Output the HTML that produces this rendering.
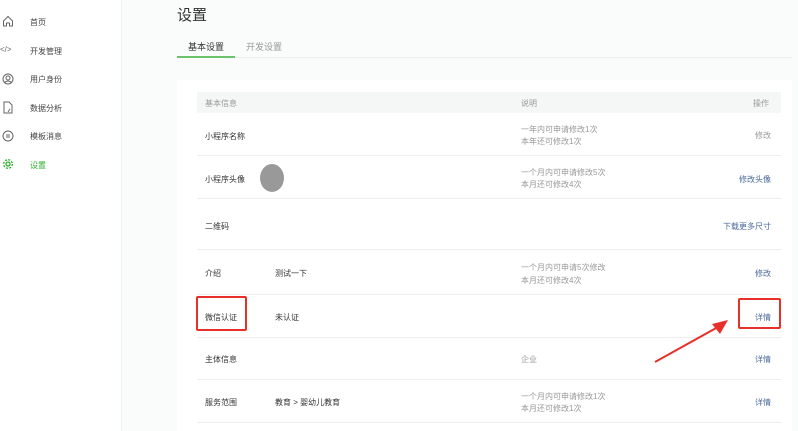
<!DOCTYPE html>
<html><head><meta charset="utf-8"><style>
*{margin:0;padding:0;box-sizing:border-box}
body{width:798px;height:431px;overflow:hidden;background:#fafbfb;font-family:"Liberation Sans","Noto Sans CJK SC",sans-serif;position:relative;color:#333}
.side{position:absolute;left:0;top:0;width:122px;height:431px;background:#fff;border-right:1px solid #eee}
.nav{position:absolute;left:30px;font-size:8px;color:#444}
.ic{position:absolute;left:2px}
.abs{position:absolute}
.t{position:absolute;font-size:8px;white-space:nowrap}
.card{position:absolute;left:177px;top:80px;width:615px;height:351px;background:#fff}
.row{position:absolute;left:197px;width:584px;border-bottom:1px solid #eee}
.g{color:#999}.b{color:#4a6a9a}
</style></head><body>
<div class="side">
<svg class="ic" style="top:15px" width="12" height="12" viewBox="0 0 12 12" fill="none" stroke="#666" stroke-width="1"><path d="M1.5 6L6 1.5 10.5 6V11H7.5V8H4.5V11H1.5Z"/></svg>
<div class="nav" style="top:17px">首页</div>
<div class="t" style="left:0;top:45px;font-size:8px;color:#666">&lt;/&gt;</div>
<div class="nav" style="top:46px">开发管理</div>
<svg class="ic" style="top:73px" width="12" height="12" viewBox="0 0 12 12" fill="none" stroke="#666"><circle cx="6" cy="6" r="5"/><circle cx="6" cy="5" r="2"/><path d="M2.5 9.5Q6 6.5 9.5 9.5"/></svg>
<div class="nav" style="top:74px">用户身份</div>
<svg class="ic" style="top:101px" width="12" height="13" viewBox="0 0 12 13" fill="none" stroke="#666"><path d="M2 1H7L10 4V12H2Z M8 8L6 11"/></svg>
<div class="nav" style="top:103px">数据分析</div>
<svg class="ic" style="top:130px" width="12" height="12" viewBox="0 0 12 12" fill="none" stroke="#666"><circle cx="6" cy="6" r="5"/><path d="M4 5H8M4 7H8"/></svg>
<div class="nav" style="top:131px">模板消息</div>
<svg class="ic" style="top:158px" width="12" height="12" viewBox="0 0 12 12" fill="none" stroke="#2aae2a" stroke-width="1.3"><circle cx="6" cy="6" r="2"/><circle cx="6" cy="6" r="4.3" stroke-dasharray="2 1.4"/></svg>
<div class="nav" style="top:160px;color:#2aae2a">设置</div>
</div>
<div class="t" style="left:177px;top:4px;font-size:15px;color:#333">设置</div>
<div class="t" style="left:188px;top:40px;font-size:9px;color:#333">基本设置</div>
<div class="t" style="left:246px;top:40px;font-size:9px;color:#999">开发设置</div>
<div class="abs" style="left:177px;top:56px;width:58px;height:2px;background:#6cc36c"></div>
<div class="abs" style="left:235px;top:57px;width:557px;height:1px;background:#eee"></div>
<div class="card"></div>
<div class="abs" style="left:197px;top:92px;width:584px;height:21px;background:#f5f6f6"></div>
<div class="t g" style="left:205px;top:98px">基本信息</div>
<div class="t g" style="left:521px;top:98px">说明</div>
<div class="t g" style="left:753px;top:98px">操作</div>
<div class="row" style="top:113px;height:43px"></div>
<div class="row" style="top:156px;height:43px"></div>
<div class="row" style="top:199px;height:51px"></div>
<div class="row" style="top:250px;height:45px"></div>
<div class="row" style="top:295px;height:43px"></div>
<div class="row" style="top:338px;height:42px"></div>
<div class="row" style="top:380px;height:43px"></div>
<div class="t" style="left:205px;top:131px">小程序名称</div>
<div class="t g" style="left:521px;top:124px">一年内可申请修改1次</div>
<div class="t g" style="left:521px;top:136px">本年还可修改1次</div>
<div class="t g" style="left:755px;top:130px">修改</div>
<div class="t" style="left:205px;top:174px">小程序头像</div>
<div class="abs" style="left:260px;top:164px;width:24px;height:28px;border-radius:50%;background:#999"></div>
<div class="t g" style="left:521px;top:167px">一个月内可申请修改5次</div>
<div class="t g" style="left:521px;top:179px">本月还可修改4次</div>
<div class="t b" style="left:739px;top:174px">修改头像</div>
<div class="t" style="left:205px;top:221px">二维码</div>
<div class="t b" style="left:723px;top:221px">下载更多尺寸</div>
<div class="t" style="left:205px;top:268px">介绍</div>
<div class="t" style="left:275px;top:268px">测试一下</div>
<div class="t g" style="left:521px;top:262px">一个月内可申请5次修改</div>
<div class="t g" style="left:521px;top:275px">本月还可修改4次</div>
<div class="t b" style="left:755px;top:268px">修改</div>
<div class="t" style="left:205px;top:312px">微信认证</div>
<div class="t" style="left:275px;top:312px">未认证</div>
<div class="t b" style="left:755px;top:312px">详情</div>
<div class="t" style="left:205px;top:354px">主体信息</div>
<div class="t g" style="left:521px;top:354px">企业</div>
<div class="t b" style="left:755px;top:354px">详情</div>
<div class="t" style="left:205px;top:397px">服务范围</div>
<div class="t" style="left:275px;top:397px">教育 &gt; 婴幼儿教育</div>
<div class="t g" style="left:521px;top:391px">一个月内可申请修改1次</div>
<div class="t g" style="left:521px;top:403px">本月还可修改1次</div>
<div class="t b" style="left:755px;top:397px">详情</div>
<div class="abs" style="left:196px;top:296px;width:51px;height:35px;border:2px solid #e8302a;border-radius:2px"></div>
<div class="abs" style="left:738px;top:298px;width:43px;height:31px;border:2px solid #e8302a;border-radius:2px"></div>
<svg class="abs" style="left:650px;top:312px" width="85" height="55" viewBox="0 0 85 55"><path d="M5 50L68 15" stroke="#e8302a" stroke-width="2"/><path d="M78 8L62 12L70 22Z" fill="#e8302a"/></svg>
</body></html>
